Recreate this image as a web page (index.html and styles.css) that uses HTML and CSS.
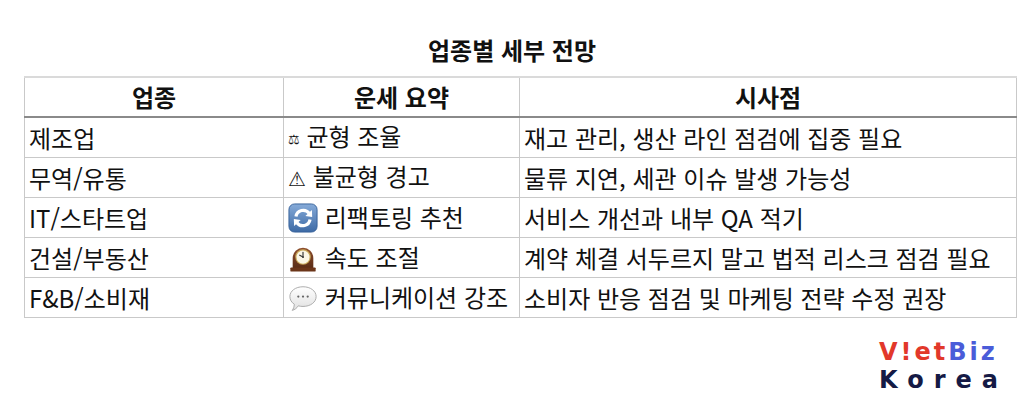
FILE: index.html
```html
<!DOCTYPE html>
<html lang="ko">
<head>
<meta charset="utf-8">
<link rel="stylesheet" href="styles.css">
</head>
<body>
<div class="page">
  <h1 class="title">업종별 세부 전망</h1>
  <table class="outlook">
    <colgroup>
      <col class="c1"><col class="c2"><col class="c3">
    </colgroup>
    <thead>
      <tr><th>업종</th><th>운세 요약</th><th>시사점</th></tr>
    </thead>
    <tbody>
      <tr><td>제조업</td><td><span class="sym small">⚖</span> 균형 조율</td><td>재고 관리, 생산 라인 점검에 집중 필요</td></tr>
      <tr><td>무역/유통</td><td><span class="sym">⚠</span> 불균형 경고</td><td>물류 지연, 세관 이슈 발생 가능성</td></tr>
      <tr><td>IT/스타트업</td><td><span class="emo"><svg viewBox="0 0 32 32" width="30" height="30"><defs><linearGradient id="gb" x1="0" y1="0" x2="0" y2="1"><stop offset="0" stop-color="#86abd9"/><stop offset="1" stop-color="#3d6aa5"/></linearGradient></defs><rect x="1" y="1" width="30" height="30" rx="6" fill="url(#gb)" stroke="#36619a" stroke-width="1"/><path d="M8.5 14.5 A7.8 7.8 0 0 1 22.5 11" fill="none" stroke="#fff" stroke-width="3.4"/><path d="M25.5 7.5 L25.8 15 L18.5 13.8 Z" fill="#fff"/><path d="M23.5 17.5 A7.8 7.8 0 0 1 9.5 21" fill="none" stroke="#fff" stroke-width="3.4"/><path d="M6.5 24.5 L6.2 17 L13.5 18.2 Z" fill="#fff"/></svg></span> 리팩토링 추천</td><td>서비스 개선과 내부 QA 적기</td></tr>
      <tr><td>건설/부동산</td><td><span class="emo"><svg viewBox="0 0 32 32" width="30" height="30"><defs><linearGradient id="gw" x1="0" y1="0" x2="0" y2="1"><stop offset="0" stop-color="#8f4f2d"/><stop offset="1" stop-color="#5a2c16"/></linearGradient></defs><path d="M5 27 L5 16 A11 11 0 0 1 27 16 L27 27 Z" fill="url(#gw)"/><rect x="2.5" y="26" width="27" height="4.5" rx="1" fill="#6b3519"/><circle cx="16" cy="15" r="8.3" fill="#c9a85a"/><circle cx="16" cy="15" r="7" fill="#fbf6e6"/><path d="M16 15 L16 10" stroke="#333" stroke-width="1.2" stroke-linecap="round"/><path d="M16 15 L12.5 13" stroke="#333" stroke-width="1.2" stroke-linecap="round"/><circle cx="16" cy="15" r="0.9" fill="#333"/></svg></span> 속도 조절</td><td>계약 체결 서두르지 말고 법적 리스크 점검 필요</td></tr>
      <tr><td>F&amp;B/소비재</td><td><span class="emo"><svg viewBox="0 0 32 32" width="30" height="30"><defs><linearGradient id="gs" x1="0" y1="0" x2="0" y2="1"><stop offset="0" stop-color="#ffffff"/><stop offset="1" stop-color="#e0e0e0"/></linearGradient></defs><path d="M16 4 C24 4 30 8.5 30 14.5 C30 20.5 24 25 16 25 C14 25 12.5 24.8 11 24.3 C9.5 26.8 7 28.6 4.5 29.2 C5.8 27.5 6.6 25.6 6.7 22.6 C3.8 20.8 2 17.8 2 14.5 C2 8.5 8 4 16 4 Z" fill="url(#gs)" stroke="#a8a8a8" stroke-width="1"/><circle cx="11" cy="14.5" r="1.2" fill="#666"/><circle cx="16" cy="14.5" r="1.2" fill="#666"/><circle cx="21" cy="14.5" r="1.2" fill="#666"/></svg></span> 커뮤니케이션 강조</td><td>소비자 반응 점검 및 마케팅 전략 수정 권장</td></tr>
    </tbody>
  </table>
  <div class="logo-row">
    <div class="logo">
      <div class="logo-top"><span class="red">V!et</span><span class="blue">Biz</span></div>
      <div class="logo-bottom">Korea</div>
    </div>
  </div>
</div>
</body>
</html>
```
FILE: styles.css
```css
html, body {
  margin: 0;
  padding: 0;
  background: #ffffff;
}
.page {
  width: 1024px;
  height: 411px;
  padding: 34px 8px 0 24px;
  box-sizing: border-box;
  font-family: "Noto Sans CJK KR", "Noto Sans", sans-serif;
  color: #111;
  overflow: hidden;
}
.title {
  margin: 0 0 10px 0;
  font-size: 24px;
  line-height: 32px;
  font-weight: 700;
  text-align: center;
  padding-right: 16px;
}
.outlook {
  border-collapse: collapse;
  width: 992px;
  table-layout: fixed;
  font-size: 24px;
}
.c1 { width: 259px; }
.c2 { width: 236px; }
.c3 { width: 497px; }
.outlook th, .outlook td {
  border: 1px solid #c9c9c9;
  padding: 0 4px;
  vertical-align: middle;
  white-space: nowrap;
  overflow: hidden;
}
.outlook th {
  height: 38px;
  font-weight: 700;
  text-align: center;
  line-height: 30px;
  border-top: 2px solid #dadada;
  border-bottom: 2px solid #8a8a8a;
}
.outlook td {
  height: 39px;
  text-align: left;
  line-height: 30px;
}
.sym {
  font-family: "DejaVu Sans", sans-serif;
  font-size: 20px;
}
.sym.small {
  font-size: 13px;
  vertical-align: 2px;
}
.emo {
  display: inline-block;
  vertical-align: -6px;
  width: 30px;
  height: 30px;
}
.emo svg { display: block; }
.logo-row {
  display: flex;
  justify-content: flex-end;
  padding-top: 20px;
}
.logo {
  width: 124px;
  margin-right: 13px;
  font-family: "DejaVu Sans", "Open Sans", sans-serif;
  font-weight: 700;
}
.logo-top {
  font-size: 24px;
  line-height: 28px;
  letter-spacing: 3px;
  white-space: nowrap;
}
.red { color: #e2382a; }
.blue { color: #4a5cd9; }
.logo-bottom {
  font-size: 24px;
  line-height: 28px;
  letter-spacing: 10px;
  color: #151a45;
  white-space: nowrap;
}
```
